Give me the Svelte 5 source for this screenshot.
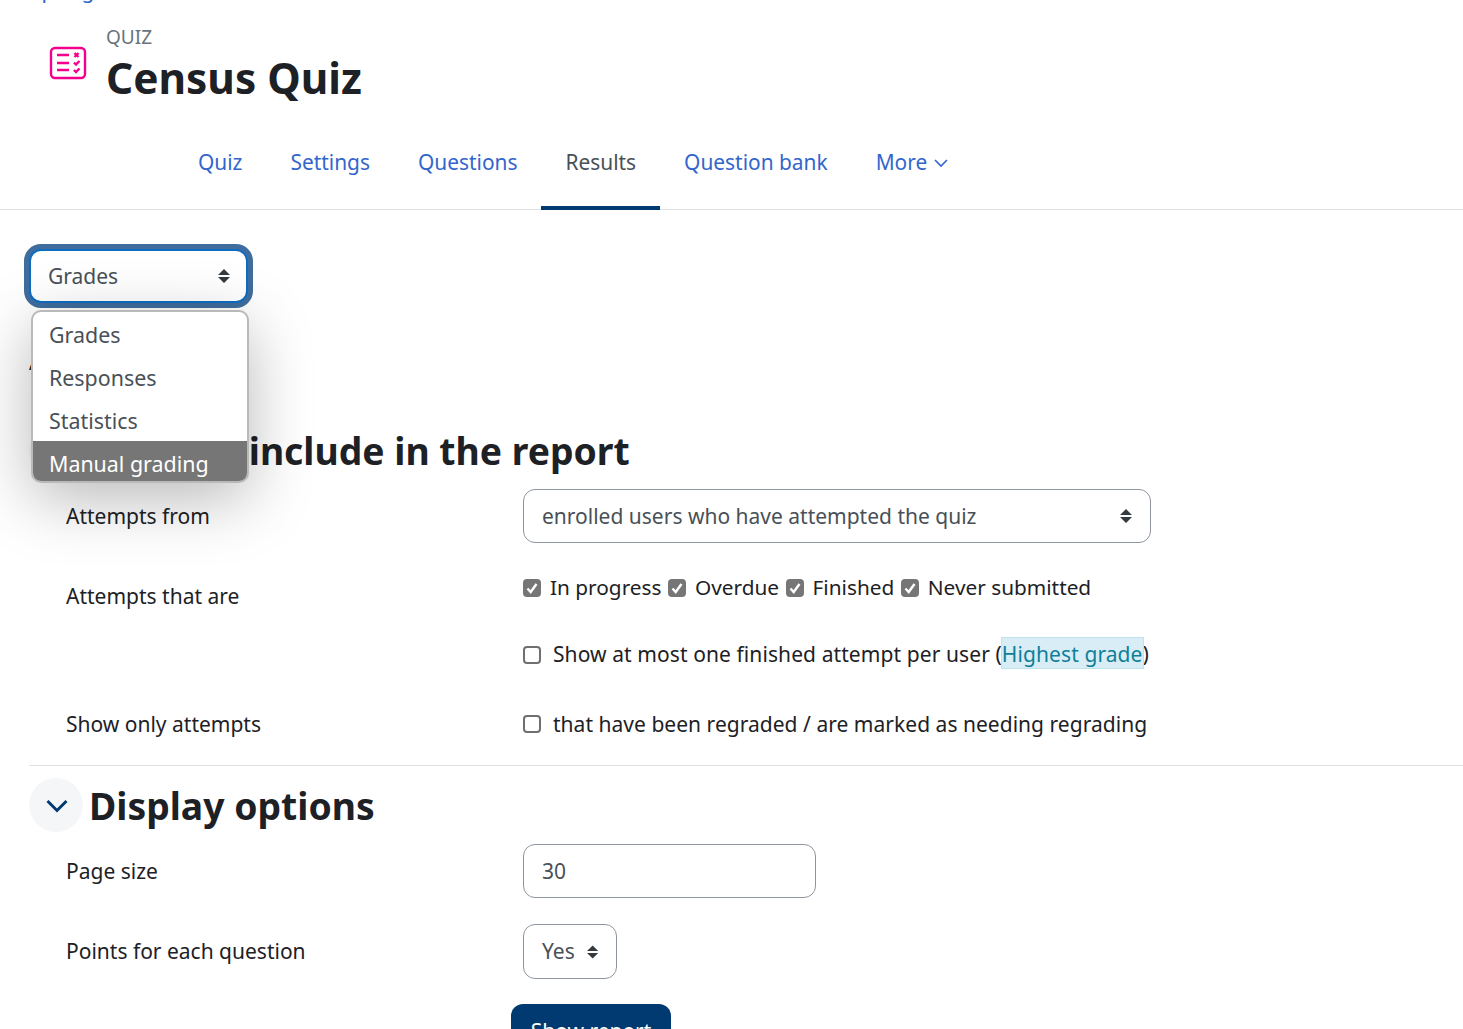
<script>
  const tabs = [
    { label: "Quiz" },
    { label: "Settings" },
    { label: "Questions" },
    { label: "Results", active: true },
    { label: "Question bank" },
  ];
  const menu = ["Grades", "Responses", "Statistics", "Manual grading"];
  const states = ["In progress", "Overdue", "Finished", "Never submitted"];
</script>

{#snippet updown()}
  <svg class="updown" width="12" height="14" viewBox="0 0 12 14">
    <path d="M6 0 L12 6 H0 Z M6 14 L0 8 H12 Z" fill="#343a40" />
  </svg>
{/snippet}

{#snippet tick()}
  <span class="check on">
    <svg width="18" height="18" viewBox="0 0 18 18">
      <path d="M4.5 9.5 L7.7 13 L13.5 5" fill="none" stroke="#fff" stroke-width="2.4" />
    </svg>
  </span>
{/snippet}

<div class="page">
  <div class="crumb"><span>Spring</span></div>

  <header class="head">
    <svg class="icon" width="38" height="34" viewBox="0 0 38 34" fill="none" stroke="#f5008c" stroke-width="2.4">
      <rect x="2" y="2" width="34" height="30" rx="4" />
      <path d="M8 9 H20 M8 17 H20 M8 24 H20" />
      <path d="M25.5 7 L29.5 11 M29.5 7 L25.5 11 M25 16.5 L27 18.5 L30.5 15 M25 24 L27 26 L30.5 22.5" />
    </svg>
    <div>
      <div class="kicker">QUIZ</div>
      <h1>Census Quiz</h1>
    </div>
  </header>

  <nav class="tabs">
    {#each tabs as tab}
      <a class="tab" class:active={tab.active} href="#top">{tab.label}</a>
    {/each}
    <a class="tab" href="#top">More
      <svg width="14" height="14" viewBox="0 0 14 14" fill="none" stroke="currentColor" stroke-width="1.6">
        <path d="M1 4 L7 10 L13 4" />
      </svg>
    </a>
  </nav>

  <main class="content">
    <div class="picker">
      <div class="select focused"><span>Grades</span>{@render updown()}</div>
      <ul class="menu">
        {#each menu as item, i}
          <li class:hot={i === 3}>{item}</li>
        {/each}
      </ul>
    </div>

    <div class="peek">Attempts</div>

    <h2 class="section first">
      <span class="toggle"></span>
      <span>What to include in the report</span>
    </h2>

    <div class="row select-row">
      <div class="label">Attempts from</div>
      <div class="field">
        <div class="select wide"><span>enrolled users who have attempted the quiz</span>{@render updown()}</div>
      </div>
    </div>

    <div class="row attempts">
      <div class="label">Attempts that are</div>
      <div class="field">
        <div class="states">
          {#each states as s}
            <label>{@render tick()}{s}</label>
          {/each}
        </div>
        <label class="single">
          <span class="check"></span>
          <span>Show at most one finished attempt per user (<mark>Highest grade</mark>)</span>
        </label>
      </div>
    </div>

    <div class="row only">
      <div class="label">Show only attempts</div>
      <div class="field">
        <label class="single">
          <span class="check"></span>
          <span>that have been regraded / are marked as needing regrading</span>
        </label>
      </div>
    </div>

    <hr />

    <h2 class="section">
      <span class="toggle">
        <svg width="28" height="24" viewBox="0 0 28 24" fill="none" stroke="#003a70" stroke-width="3">
          <path d="M5.5 8 L15 17.5 L24.5 8" />
        </svg>
      </span>
      <span class="title">Display options</span>
    </h2>

    <div class="row size">
      <div class="label">Page size</div>
      <div class="field"><div class="select num">30</div></div>
    </div>

    <div class="row points">
      <div class="label">Points for each question</div>
      <div class="field"><div class="select yes"><span>Yes</span>{@render updown()}</div></div>
    </div>

    <div class="actions"><button>Show report</button></div>
  </main>
</div>

<style>
  :global(body) {
    margin: 0;
    background: #fff;
  }
  .page {
    height: 1029px;
    overflow: hidden;
    font-family: "Noto Sans", "Open Sans", sans-serif;
    font-size: 21px;
    line-height: 33px;
    color: #1d2125;
  }
  .crumb {
    height: 3px;
    overflow: hidden;
    display: flex;
    align-items: flex-end;
    padding-left: 30px;
    line-height: 26px;
    color: #3366cc;
  }
  .head {
    display: flex;
    align-items: center;
    padding: 12px 0 0 49px;
    gap: 19px;
    height: 109px;
    box-sizing: border-box;
  }
  .icon {
    flex: none;
    margin-bottom: 2px;
  }
  .kicker {
    font-size: 19px;
    line-height: 28px;
    color: #6a737b;
  }
  h1 {
    margin: 0;
    font-size: 42.4px;
    line-height: 54px;
    font-weight: 700;
  }
  .tabs {
    display: flex;
    gap: 0;
    padding-left: 174px;
    height: 98px;
    box-sizing: border-box;
    border-bottom: 1px solid #dee2e6;
    font-size: 20.9px;
  }
  .tab {
    display: flex;
    align-items: center;
    gap: 7px;
    height: 98px;
    box-sizing: border-box;
    padding: 3px 24px 0;
    color: #3366cc;
    text-decoration: none;
  }
  .tab.active {
    color: #495057;
    border-bottom: 4px solid #003a70;
    padding-top: 7px;
  }
  .content {
    position: relative;
    padding: 39px 0 0 29px;
  }
  .picker {
    position: relative;
    height: 54px;
    width: 216px;
  }
  .select {
    display: flex;
    align-items: center;
    justify-content: space-between;
    box-sizing: border-box;
    height: 54px;
    padding: 0 18px;
    border: 1px solid #8f959e;
    border-radius: 12px;
    background: #fff;
    color: #495057;
  }
  .select.focused {
    width: 219px;
    padding: 0 16px 0 17px;
    border: 2px solid #0f6cbf;
    box-shadow: 0 0 0 5px #3f6d9e;
  }
  .menu {
    position: absolute;
    z-index: 2;
    left: 2px;
    top: 61px;
    width: 218px;
    height: 173px;
    box-sizing: border-box;
    margin: 0;
    padding: 1px 0 0;
    list-style: none;
    background: #fff;
    border: 2px solid #b9b9b9;
    border-radius: 10px;
    overflow: hidden;
    font-size: 21.4px;
    color: #495057;
    box-shadow: 0 16px 64px rgba(0, 0, 0, 0.28);
  }
  .menu li {
    height: 43px;
    line-height: 43px;
    padding-left: 16px;
  }
  .menu li.hot {
    height: 46px;
    margin-top: -1px;
    padding-top: 1px;
    background: #767676;
    color: #fff;
  }
  .peek {
    position: absolute;
    left: 29px;
    top: 136px;
  }
  .section {
    display: flex;
    align-items: center;
    gap: 6px;
    margin: 0;
    height: 54px;
    font-size: 37.3px;
    font-weight: 700;
    line-height: 54px;
  }
  .section.first {
    gap: 8px;
    margin-top: 121px;
    margin-bottom: 11px;
  }
  .title {
    padding-top: 2px;
  }
  .toggle {
    flex: none;
    display: flex;
    align-items: center;
    justify-content: center;
    width: 54px;
    height: 54px;
    border-radius: 50%;
    background: #f5f6f8;
  }
  .row {
    display: grid;
    grid-template-columns: 457px 1fr;
    padding-left: 37px;
  }
  .select.wide {
    width: 628px;
  }
  .select.num {
    width: 293px;
  }
  .select.yes {
    width: 94px;
    height: 55px;
    gap: 12px;
  }
  .select-row .label,
  .size .label,
  .points .label {
    line-height: 54px;
  }
  .attempts {
    margin-top: 28px;
  }
  .attempts .label {
    padding-top: 9px;
  }
  .states {
    display: flex;
    gap: 6.5px;
    height: 33px;
    font-size: 20.8px;
  }
  .states label {
    display: flex;
    align-items: center;
    gap: 9px;
  }
  .single {
    display: flex;
    align-items: center;
    gap: 12px;
    letter-spacing: 0.03px;
  }
  .attempts .single {
    margin-top: 34px;
    letter-spacing: 0.09px;
  }
  .only {
    margin-top: 37px;
  }
  .only .single .check {
    margin-top: -2px;
  }
  .check {
    flex: none;
    box-sizing: border-box;
    width: 18px;
    height: 18px;
    border: 2px solid #6f6f6f;
    border-radius: 4px;
    background: #fff;
  }
  .check.on {
    background: #767676;
    border: 0;
    display: flex;
  }
  mark {
    padding-top: 2px;
    background: #d8edf6;
    outline: 1px solid #bde3ee;
    color: #0f7f99;
  }
  hr {
    margin: 24px 0 12px;
    border: 0;
    border-top: 1px solid #dee2e6;
  }
  .size {
    margin-top: 12px;
  }
  .points {
    margin-top: 26px;
  }
  .actions {
    padding: 25px 0 0 482px;
  }
  button {
    display: block;
    width: 160px;
    height: 54px;
    border: 0;
    border-radius: 12px;
    background: #003a70;
    color: #fff;
    font: inherit;
  }
</style>
